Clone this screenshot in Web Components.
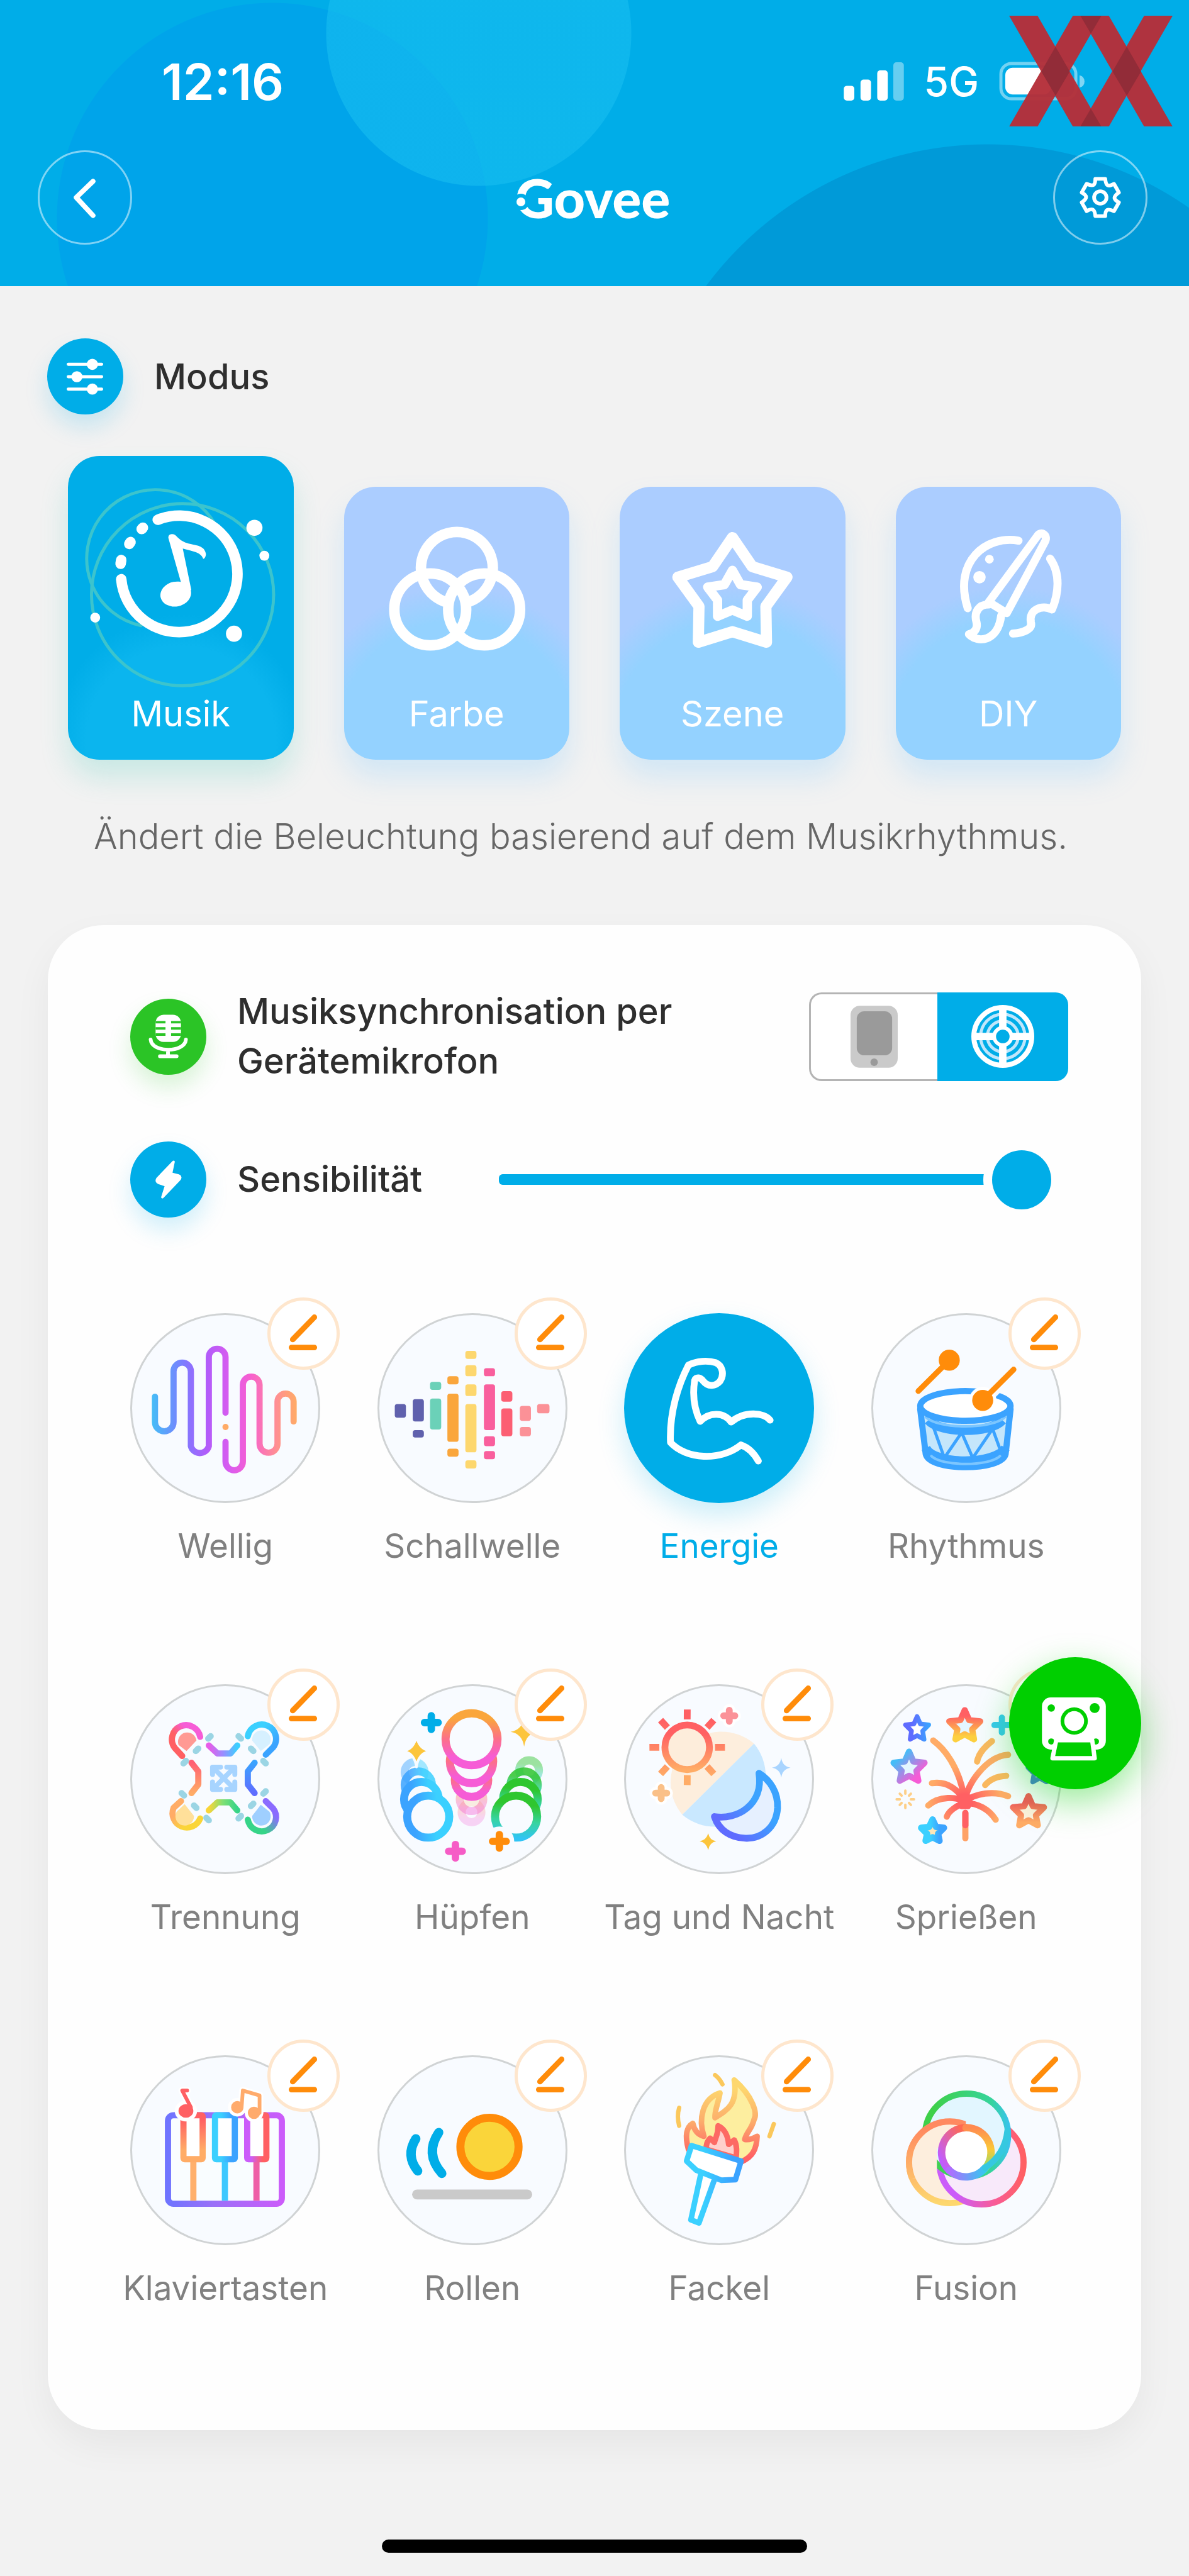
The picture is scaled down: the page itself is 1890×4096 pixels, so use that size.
<!DOCTYPE html>
<html lang="de">
<head>
<meta charset="utf-8">
<meta name="viewport" content="width=device-width, initial-scale=1">
<title>Govee – Musikmodus</title>
<style>
  body {
    margin: 0;
    background: #f2f2f2;
    font-family: Inter, "Noto Sans", sans-serif;
    color: #2e2e2e;
  }

  .modes {
    display: grid;
    grid-template-columns: repeat(4, 1fr);
    gap: 80px;
    align-items: end;
    padding: 66px 108px 0;
  }

  .hint {
    margin: 82px 0 101px;
    padding-left: 149px;
    font-size: 56px;
    line-height: 80px;
    font-weight: 300;
    color: #666;
  }

  .effects {
    display: grid;
    grid-template-columns: repeat(4, 1fr);
    row-gap: 188px;
    margin: 152px 82px 0 86px;
  }

  svg { fill: none; stroke-linecap: round; stroke-linejoin: round; }
</style>
</head>
<body>

<app-header></app-header>

<main>
  <section-title>
    <icon-badge slot="icon">
      <svg viewBox="0 0 123 123" stroke="#fff" stroke-width="5">
        <path d="M34 42H88M34 62H88M34 82H88"/>
        <g fill="#fff" stroke="none"><circle cx="73" cy="42" r="9"/><circle cx="48" cy="62" r="9"/><circle cx="73" cy="82" r="9"/></g>
      </svg>
    </icon-badge>
    Modus
  </section-title>

  <div class="modes">
    <mode-card active>
      <svg slot="icon" viewBox="0 0 364 384">
        <g stroke="#3cc4cd" stroke-width="5">
          <path d="M238 111A111 111 0 1 0 118 274"/>
          <circle cx="185" cy="224" r="147"/>
        </g>
        <g stroke="#fff" stroke-width="17">
          <path d="M145 103A94 94 0 1 1 86 199"/>
          <path d="M86 168L85 174M99 142L101 139M119 118L121 116"/>
        </g>
        <g fill="#fff">
          <circle cx="301" cy="116" r="13"/>
          <circle cx="317" cy="161" r="8"/>
          <circle cx="44" cy="261" r="8"/>
          <circle cx="268" cy="287" r="13"/>
          <ellipse cx="174" cy="223" rx="25" ry="20" transform="rotate(-12 174 223)"/>
          <path d="M163 132C163 126 171 125 176 132C186 143 200 143 210 146C222 150 224 160 219 165C214 153 196 152 184 148L198 216L186 213Z" stroke="#fff" stroke-width="2"/>
        </g>
      </svg>
      Musik
    </mode-card>
    <mode-card>
      <svg slot="icon" viewBox="0 0 364 334" stroke="#fff" stroke-width="17">
        <path d="M161 185A58 58 0 1 1 203 185"/>
        <circle cx="139" cy="198" r="58"/>
        <circle cx="226" cy="198" r="58"/>
      </svg>
      Farbe
    </mode-card>
    <mode-card>
      <svg slot="icon" viewBox="0 0 364 334" stroke="#fff" stroke-width="18">
        <path d="M182 82L214 129L270 146L236 193L237 251L182 234L127 251L128 193L94 146L150 129Z"/>
        <path stroke-width="15" d="M182 135L195 158L222 162L206 183L206 209L182 199L158 209L158 183L142 162L169 158Z"/>
      </svg>
      Szene
    </mode-card>
    <mode-card>
      <svg slot="icon" viewBox="0 0 364 334" stroke="#fff" stroke-width="13">
        <path d="M198 87C146 78 92 120 116 196"/>
        <path d="M249 116C266 140 263 172 252 198C236 190 214 198 218 219C221 230 205 236 189 237"/>
        <path d="M150 186L228 80C234 70 246 78 241 88L179 204Z"/>
        <path d="M150 190C133 190 126 203 130 218C133 230 126 236 118 238C132 253 165 250 170 208"/>
        <g fill="#fff" stroke="none"><circle cx="151" cy="117" r="7"/><circle cx="135" cy="146" r="10"/></g>
      </svg>
      DIY
    </mode-card>
  </div>

  <p class="hint">Ändert die Beleuchtung basierend auf dem Musikrhythmus.</p>

  <music-panel>
    <setting-row>
      <icon-badge slot="icon" tone="green">
        <svg viewBox="0 0 123 123" stroke="#fff" stroke-width="6">
          <rect x="41" y="26" width="41" height="44" rx="13" fill="#fff" stroke="none"/>
          <path d="M41 38H57M66 38H82M41 48H57M66 48H82M41 58H57M66 58H82" stroke="#2bc426" stroke-width="4" stroke-linecap="butt"/>
          <path d="M33 66C35 88 88 88 90 66M61 84V93M48 93H75"/>
        </svg>
      </icon-badge>
      Musiksynchronisation per<br>Gerätemikrofon
      <source-toggle slot="control"></source-toggle>
    </setting-row>
    <setting-row>
      <icon-badge slot="icon">
        <svg viewBox="0 0 123 123">
          <path d="M70 33L44 60C42 63 43 66 46 67L58 71L52 90L79 62C82 59 81 56 78 55L66 52Z" fill="#fff" stroke="#fff" stroke-width="4"/>
        </svg>
      </icon-badge>
      Sensibilität
      <level-slider slot="control" label="Sensibilität"></level-slider>
    </setting-row>

    <div class="effects">
      <effect-item>
        <svg slot="icon" viewBox="0 0 307 307" stroke="url(#wave)" stroke-width="10">
          <linearGradient id="wave" gradientUnits="userSpaceOnUse" x1="35" y1="0" x2="269" y2="0">
            <stop offset="0" stop-color="#45bdf7"/><stop offset=".22" stop-color="#7d7bff"/><stop offset=".38" stop-color="#b25cfa"/>
            <stop offset=".55" stop-color="#dc5cee"/><stop offset=".68" stop-color="#f75fcf"/><stop offset=".86" stop-color="#ff8f93"/><stop offset="1" stop-color="#ffab66"/>
          </linearGradient>
          <path d="M40 135V176A15 15 0 0 0 70 176V94A14 14 0 0 1 98 94V215A15 15 0 0 0 127 215V71A13 13 0 0 1 154 71V161"/>
          <path d="M154 208V240A14 14 0 0 0 182 240V116A13 13 0 0 1 209 116V211A14 14 0 0 0 238 211V143A13 13 0 0 1 264 143V175"/>
          <circle cx="154" cy="184" r="5" fill="#ffab66" stroke="none"/>
        </svg>
        Wellig
      </effect-item>
      <effect-item>
        <svg slot="icon" viewBox="0 0 307 307">
          <g fill="#6061ad"><rect x="28" y="147" width="18" height="22" rx="4"/><rect x="57" y="139" width="18" height="36" rx="4"/><rect x="57" y="189" width="18" height="12" rx="4"/></g>
          <g fill="#6bd1b8"><rect x="85" y="111" width="18" height="13" rx="4"/><rect x="85" y="138" width="18" height="50" rx="4"/></g>
          <g fill="#faa63c"><rect x="113" y="102" width="18" height="13" rx="4"/><rect x="113" y="130" width="18" height="78" rx="4"/><rect x="113" y="219" width="18" height="13" rx="4"/></g>
          <g fill="#fdd76e"><rect x="142" y="61" width="18" height="13" rx="4"/><rect x="142" y="84" width="18" height="18" rx="4"/><rect x="142" y="115" width="18" height="19" rx="4"/><rect x="142" y="147" width="18" height="78" rx="4"/><rect x="142" y="238" width="18" height="13" rx="4"/></g>
          <g fill="#f95f9d"><rect x="172" y="89" width="18" height="13" rx="4"/><rect x="172" y="115" width="18" height="74" rx="4"/><rect x="172" y="199" width="18" height="16" rx="4"/><rect x="172" y="223" width="18" height="13" rx="4"/></g>
          <g fill="#fc5f73"><rect x="200" y="126" width="18" height="17" rx="4"/><rect x="200" y="154" width="18" height="45" rx="4"/></g>
          <g fill="#fb9197"><rect x="230" y="150" width="18" height="24" rx="4"/><rect x="230" y="184" width="18" height="15" rx="4"/><rect x="258" y="147" width="20" height="15" rx="4"/></g>
        </svg>
        Schallwelle
      </effect-item>
      <effect-item active>
        <svg slot="icon" viewBox="0 0 307 307" stroke="#fff" stroke-width="11">
          <path d="M236 173C226 160 194 158 173 176C162 160 138 159 123 175C112 152 111 128 114 109C116 102 124 104 128 110C136 120 148 118 155 110C163 98 158 84 148 80C135 76 118 77 104 84C88 115 73 160 75 209C100 236 155 240 189 213Q206 219 217 239"/>
        </svg>
        Energie
      </effect-item>
      <effect-item>
        <svg slot="icon" viewBox="0 0 307 307">
          <path d="M78 152L88 190V226C92 256 212 256 217 226V190L225 152Z" fill="#c4e6fb"/>
          <path d="M79 155L88 228C94 256 211 256 217 228L225 155" stroke="#3ba3ff" stroke-width="10"/>
          <path d="M92 173C112 195 192 195 212 173M88 218C102 246 200 246 217 218" stroke="#3ba3ff" stroke-width="15" stroke-linecap="butt"/>
          <path d="M101 186L118 234L146 193L164 234L196 187L208 220" stroke="#3ba3ff" stroke-width="5"/>
          <path d="M88 168C108 188 196 188 216 168M97 231C115 248 190 248 208 231" stroke="#7cc6ff" stroke-width="4"/>
          <ellipse cx="152" cy="150" rx="73" ry="24" fill="#fff" stroke="#3ba3ff" stroke-width="10"/>
          <path d="M180 141L230 91" stroke="#f8fbff" stroke-width="22"/>
          <circle cx="180" cy="141" r="22" fill="#fff"/>
          <g stroke="#ff8c0a" stroke-width="9"><path d="M126 76L76 126M180 141L230 91"/></g>
          <g fill="#ff8c0a"><circle cx="126" cy="76" r="17"/><circle cx="180" cy="141" r="17"/></g>
        </svg>
        Rhythmus
      </effect-item>

      <effect-item>
        <svg slot="icon" viewBox="0 0 307 307" stroke-width="10">
          <linearGradient id="tl" x1="0" y1="1" x2="1" y2="0"><stop offset=".4" stop-color="#ff6063"/><stop offset=".7" stop-color="#f65cd6"/></linearGradient>
          <linearGradient id="tr" x1="0" y1="0" x2="1" y2="1"><stop offset=".3" stop-color="#3bd0ff"/><stop offset=".8" stop-color="#3ba3ff"/></linearGradient>
          <linearGradient id="bl" x1="0" y1="0" x2="1" y2="1"><stop offset=".3" stop-color="#ffac66"/><stop offset=".7" stop-color="#fad538"/></linearGradient>
          <linearGradient id="br" x1="0" y1="1" x2="1" y2="0"><stop offset=".3" stop-color="#36d488"/><stop offset=".75" stop-color="#8b6bff"/></linearGradient>
          <linearGradient id="bt"><stop offset="0" stop-color="#e85ce8"/><stop offset=".5" stop-color="#9a8cff"/><stop offset="1" stop-color="#3bd0ff"/></linearGradient>
          <linearGradient id="bb"><stop offset="0" stop-color="#fad538"/><stop offset=".5" stop-color="#7edf74"/><stop offset="1" stop-color="#36d488"/></linearGradient>
          <linearGradient id="bx" x1="0" y1="0" x2="0" y2="1"><stop offset="0" stop-color="#ff5f73"/><stop offset="1" stop-color="#ffac66"/></linearGradient>
          <linearGradient id="by" x1="0" y1="0" x2="0" y2="1"><stop offset="0" stop-color="#3ba3ff"/><stop offset="1" stop-color="#5f6cff"/></linearGradient>
          <path d="M113 85A23 23 0 1 0 72 103L84 116" stroke="url(#tl)"/>
          <path d="M190 84A23 23 0 1 1 231 102L219 114" stroke="url(#tr)"/>
          <path d="M113 217A23 23 0 1 1 70 200L82 189" stroke="url(#bl)"/>
          <path d="M190 219A23 23 0 1 0 231 201L219 189" stroke="url(#br)"/>
          <path d="M78 98A15 15 0 1 1 107 91L91 108Z" fill="#ff9a94"/>
          <path d="M197 91A15 15 0 1 1 225 97L211 108Z" fill="#d6f0ff"/>
          <path d="M75 206A15 15 0 1 0 103 213L88 194Z" fill="#ffe09a"/>
          <path d="M197 213A15 15 0 1 0 225 206L211 195Z" fill="#9fcfff"/>
          <path d="M127 99L141 112H162L173 99" stroke="url(#bt)"/>
          <path d="M127 204L141 191H162L173 204" stroke="url(#bb)"/>
          <path d="M99 127L110 141V162L99 176" stroke="url(#bx)"/>
          <path d="M201 127L190 141V162L201 176" stroke="url(#by)"/>
          <path stroke="#9bd5e4" d="M126 88L130 84M106 108L110 104M86 128L90 124M175 84L179 88M195 104L199 108M215 124L219 128M83 176L87 180M103 196L107 200M123 216L127 220M219 173L215 177M199 193L195 197M179 213L175 217"/>
          <path stroke="#a7d4ff" stroke-width="8" d="M135 136L167 168M167 136L135 168M146 134H133V146M156 134H169V146M146 170H133V158M156 170H169V158"/>
        </svg>
        Trennung
      </effect-item>
      <effect-item>
        <svg slot="icon" viewBox="0 0 307 307" stroke-width="13">
          <linearGradient id="warm" x1="0" y1="0" x2="0" y2="1"><stop offset=".1" stop-color="#faa63c"/><stop offset=".5" stop-color="#fc6f8a"/><stop offset=".85" stop-color="#f65cd6"/></linearGradient>
          <linearGradient id="cool"><stop offset=".2" stop-color="#3ba3ff"/><stop offset=".7" stop-color="#3bd0ff"/></linearGradient>
          <linearGradient id="leaf" x1=".5" y1="0" x2=".4" y2="1"><stop offset=".2" stop-color="#2fc62f"/><stop offset=".6" stop-color="#36d4a0"/><stop offset="1" stop-color="#30c4f5"/></linearGradient>
          <g stroke="url(#warm)" fill="#f8fbff">
            <circle cx="152" cy="207" r="16" opacity=".25"/>
            <circle cx="152" cy="186" r="19" opacity=".4"/>
            <circle cx="152" cy="155" r="27"/>
            <circle cx="152" cy="125" r="35"/>
            <circle cx="152" cy="89" r="42"/>
          </g>
          <g stroke="url(#cool)" fill="#f8fbff">
            <circle cx="60" cy="142" r="16" opacity=".45"/>
            <circle cx="66" cy="163" r="22" opacity=".85"/>
            <circle cx="71" cy="186" r="28"/>
            <circle cx="82" cy="214" r="34"/>
          </g>
          <g stroke="url(#leaf)" fill="#f8fbff">
            <circle cx="245" cy="139" r="16" opacity=".45"/>
            <circle cx="237" cy="163" r="22" opacity=".85"/>
            <circle cx="231" cy="186" r="28"/>
            <circle cx="224" cy="214" r="34"/>
          </g>
          <circle cx="197" cy="254" r="24" fill="#f8fbff"/>
          <path d="M87 51V73M76 62H98" stroke="#00ade8" stroke-width="12"/>
          <path d="M126 259V281M115 270H137" stroke="#f65cc6" stroke-width="12"/>
          <path d="M197 243V265M186 254H208" stroke="#ff8c0a" stroke-width="12"/>
          <path d="M63 82Q66 105 86 108Q66 111 63 134Q60 111 41 108Q60 105 63 82Z" fill="#fcc53c" stroke="#f8fbff" stroke-width="4"/>
          <path d="M237 54Q240 74 258 77Q240 80 237 101Q234 80 215 77Q234 74 237 54Z" fill="#fcc53c"/>
        </svg>
        Hüpfen
      </effect-item>
      <effect-item>
        <svg slot="icon" viewBox="0 0 307 307">
          <linearGradient id="sun" x1="0" y1="0" x2="0" y2="1"><stop offset=".2" stop-color="#ff6063"/><stop offset="1" stop-color="#ffac66"/></linearGradient>
          <linearGradient id="rays" gradientUnits="userSpaceOnUse" x1="0" y1="50" x2="0" y2="150"><stop offset=".1" stop-color="#ff6063"/><stop offset="1" stop-color="#ffac66"/></linearGradient>
          <linearGradient id="moon" x1="1" y1="0" x2="0" y2="1"><stop offset=".4" stop-color="#3ba3ff"/><stop offset=".8" stop-color="#5f6cff"/></linearGradient>
          <path d="M210 96A82 82 0 0 0 94 211Z" fill="#fdeedd"/>
          <path d="M210 96A82 82 0 0 1 94 211Z" fill="#c9e8ff"/>
          <circle cx="102" cy="102" r="36" fill="#fdeddb" stroke="url(#sun)" stroke-width="11"/>
          <path stroke="url(#rays)" stroke-width="11" stroke-linecap="butt" d="M102.1 41L102 57M102.1 147L102 163M41 102.1L57 102M147 102.1L163 102M59 58L70 70M145 58L134 70M59 145L70 133M145 145L134 133"/>
          <path d="M170 42V60M161 51H179M60 167V185M51 176H69" stroke="#fff" stroke-width="20"/>
          <path d="M170 42V60M161 51H179" stroke="#fb9298" stroke-width="11"/>
          <path d="M60 167V185M51 176H69" stroke="#fac088" stroke-width="11"/>
          <path d="M254 119Q256 133 269 135Q256 137 254 151Q252 137 239 135Q252 133 254 119Z" fill="#a8d4ff"/>
          <path d="M136 241Q138 252 149 254Q138 256 136 268Q133 256 122 254Q133 252 136 241Z" fill="#fcc53c"/>
          <path d="M218 144C236 155 249 175 248 200C246 232 222 250 196 249C172 248 153 236 146 214C182 220 226 195 218 144Z" fill="#e6f0ff" stroke="url(#moon)" stroke-width="11"/>
        </svg>
        Tag und Nacht
      </effect-item>
      <effect-item>
        <svg slot="icon" viewBox="0 0 307 307">
          <linearGradient id="s1"><stop offset=".3" stop-color="#5f6cff"/><stop offset="1" stop-color="#3ba3ff"/></linearGradient>
          <linearGradient id="s2" x1="0" y1="0" x2="0" y2="1"><stop offset=".2" stop-color="#ff6063"/><stop offset=".9" stop-color="#fdd040"/></linearGradient>
          <linearGradient id="s3" x1="0" y1="0" x2="1" y2="1"><stop offset=".2" stop-color="#45bdf7"/><stop offset=".8" stop-color="#f65cd6"/></linearGradient>
          <linearGradient id="s4"><stop offset=".4" stop-color="#3bd0ff"/><stop offset=".8" stop-color="#3ba3ff"/></linearGradient>
          <linearGradient id="s5" x1="0" y1="0" x2="0" y2="1"><stop offset=".2" stop-color="#f05a5a"/><stop offset=".9" stop-color="#ffac66"/></linearGradient>
          <radialGradient id="burst" gradientUnits="userSpaceOnUse" cx="151" cy="190" r="85"><stop offset=".15" stop-color="#ff6063"/><stop offset=".7" stop-color="#ffab66"/></radialGradient>
          <g stroke-width="10">
            <path transform="translate(74 71) scale(.75)" stroke="url(#s1)" fill="#fff" d="M0 -25L7 -9L25 -7L12 6L15 24L0 16L-15 24L-12 6L-25 -7L-7 -9Z"/>
            <path transform="translate(151 67)" stroke="url(#s2)" fill="#e4f6ff" d="M0 -25L7 -9L25 -7L12 6L15 22L0 14L-15 22L-12 6L-25 -7L-7 -9Z"/>
            <path transform="translate(61 134)" stroke="url(#s3)" fill="#e4f6ff" d="M0 -25L7 -9L25 -7L12 6L15 22L0 14L-15 22L-12 6L-25 -7L-7 -9Z"/>
            <path transform="translate(99 237) scale(.8)" stroke="url(#s4)" stroke-width="13" fill="#fde6b8" d="M0 -23L7 -8L23 -6L11 6L14 20L0 13L-14 20L-11 6L-23 -6L-7 -8Z"/>
            <path transform="translate(254 206)" stroke="url(#s5)" fill="#fdf0dd" d="M0 -25L7 -9L25 -7L12 6L15 22L0 14L-15 22L-12 6L-25 -7L-7 -9Z"/>
            <path transform="translate(272 140) scale(.75)" stroke="#4a7fd8" d="M0 -25L7 -9L25 -7L12 6L15 24L0 16L-15 24L-12 6L-25 -7L-7 -9Z"/>
          </g>
          <path d="M211 54V78M199 66H223" stroke="#39c8f0" stroke-width="10"/>
          <path d="M55 177V172M55 195V200M46 186H41M64 186H69M49 180L46 177M61 180L64 177M49 192L46 195M61 192L64 195" stroke="#fdcf88" stroke-width="4"/>
          <g stroke="url(#burst)" stroke-width="10">
            <path d="M100 91C128 112 146 150 151 190C154 160 188 116 221 114"/>
            <path d="M98 160C124 156 142 172 151 190M92 196C110 180 138 182 151 190M221 181C198 172 168 176 151 190M122 214C125 205 138 196 151 192C172 192 190 202 201 219"/>
            <path d="M144 183L158 183L156 197L146 197Z" fill="#ff6063"/>
          </g>
          <path d="M151.9 208L152 249" stroke="#ffa266" stroke-width="10"/>
          <path d="M152 208V228" stroke="#ff6063" stroke-width="10"/>
          <path d="M195 92Q174 108 171 125M218 148Q196 149 184 163" stroke="#fbb860" stroke-width="10"/>
        </svg>
        Sprießen
      </effect-item>

      <effect-item>
        <svg slot="icon" viewBox="0 0 307 307" stroke-width="10">
          <linearGradient id="frame"><stop offset="0" stop-color="#6f74ff"/><stop offset=".4" stop-color="#9a70f8"/><stop offset="1" stop-color="#cb5cfa"/></linearGradient>
          <linearGradient id="k1" x1="0" y1="0" x2="0" y2="1"><stop offset=".1" stop-color="#ff6063"/><stop offset=".8" stop-color="#ffac66"/></linearGradient>
          <linearGradient id="k2"><stop offset=".3" stop-color="#3bd0ff"/><stop offset=".8" stop-color="#3ba3ff"/></linearGradient>
          <linearGradient id="k3"><stop offset=".2" stop-color="#cb5cfa"/><stop offset=".8" stop-color="#ff6063"/></linearGradient>
          <rect x="61" y="97" width="184" height="143" rx="9" fill="#f9fdff" stroke="url(#frame)"/>
          <g stroke-linecap="butt"><path d="M102 170V235" stroke="#ffb06c"/><path d="M153 170V235" stroke="#3cc8ff"/><path d="M204 170V235" stroke="#ee5fa6"/></g>
          <g fill="#fff">
            <rect x="86" y="97" width="31" height="71" rx="2" stroke="url(#k1)"/>
            <rect x="137" y="97" width="32" height="71" rx="2" stroke="url(#k2)"/>
            <rect x="189" y="97" width="31" height="71" rx="2" stroke="url(#k3)"/>
          </g>
          <g fill="#fff" stroke="#fff" stroke-width="12">
            <ellipse cx="90" cy="90" rx="12" ry="11"/><path d="M98 84L84 57H92"/>
            <circle cx="173" cy="84" r="9"/><circle cx="200" cy="93" r="9"/><path d="M180 84L182 57L209 65V93"/>
          </g>
          <g fill="#ff6063" stroke="#ff6063" stroke-width="6"><ellipse cx="90" cy="90" rx="9" ry="8"/><path d="M98 84L84 57H92" fill="none"/></g>
          <g fill="#ffab6c" stroke="#ffab6c" stroke-width="6"><circle cx="173" cy="84" r="7"/><circle cx="200" cy="93" r="7"/><path d="M180 84L182 57L209 65V93" fill="none"/></g>
        </svg>
        Klaviertasten
      </effect-item>
      <effect-item>
        <svg slot="icon" viewBox="0 0 307 307">
          <circle cx="181" cy="148" r="47" fill="#fad53a" stroke="#ff8c0a" stroke-width="13"/>
          <path d="M62 135Q45 162 65 187M99 125Q76 159 104 191" stroke="#00ade8" stroke-width="15"/>
          <rect x="56" y="217" width="194" height="16" rx="8" fill="#cacaca"/>
        </svg>
        Rollen
      </effect-item>
      <effect-item>
        <svg slot="icon" viewBox="0 0 307 307" stroke-width="9">
          <linearGradient id="fire" x1="0" y1="0" x2="0" y2="1"><stop offset=".1" stop-color="#fdd76e"/><stop offset=".5" stop-color="#fcae6c"/><stop offset=".75" stop-color="#fd8068"/><stop offset=".95" stop-color="#ff6063"/></linearGradient>
          <linearGradient id="torch"><stop offset=".3" stop-color="#3bd0ff"/><stop offset=".85" stop-color="#3ba3ff"/></linearGradient>
          <path d="M104 152C98 130 101 116 111 110C113 120 118 128 129 131C120 104 126 70 155 61C152 78 146 90 147 101C168 88 184 78 178 40C208 66 216 94 210 104C206 120 198 124 195 136C202 137 210 134 215 131C214 152 208 164 190 172Z" fill="#fdee9f" stroke="url(#fire)"/>
          <path d="M133 152C132 144 135 138 139 134L146 141C148 132 152 128 152 114C164 120 168 132 169 144L178 137C183 146 182 156 181 166Z" fill="#ffd0cc" stroke="#fd6a64"/>
          <path d="M124 192L108 266L121 271L146 201M109 146L189 171L180 201L157 202L117 186L101 171Z" fill="#fff" stroke="url(#torch)"/>
          <path d="M147 32Q154 37 159 47M89 85Q85 98 89 114M242 111L235 131" stroke="#fbc85c" stroke-width="7"/>
        </svg>
        Fackel
      </effect-item>
      <effect-item>
        <svg slot="icon" viewBox="0 0 307 307" stroke-width="10">
          <linearGradient id="f1"><stop offset=".1" stop-color="#3fd04a"/><stop offset=".8" stop-color="#36d49c"/><stop offset="1" stop-color="#38c4e8"/></linearGradient>
          <linearGradient id="f2" x1="0" y1="0" x2="0" y2="1"><stop offset=".1" stop-color="#ff8a60"/><stop offset="1" stop-color="#fdd76e"/></linearGradient>
          <linearGradient id="f3"><stop offset=".2" stop-color="#cb5cfa"/><stop offset=".65" stop-color="#f85c98"/><stop offset="1" stop-color="#ff6063"/></linearGradient>
          <linearGradient id="f4" x1="0" y1="1" x2="1" y2="0"><stop offset=".1" stop-color="#c05cff"/><stop offset=".9" stop-color="#ff6a50"/></linearGradient>
          <linearGradient id="f5" x1="0" y1="0" x2="0" y2="1"><stop offset="0" stop-color="#ff8a50"/><stop offset=".5" stop-color="#fac838"/><stop offset="1" stop-color="#7ede74"/></linearGradient>
          <linearGradient id="f6"><stop offset="0" stop-color="#b06cff"/><stop offset="1" stop-color="#34c8f0"/></linearGradient>
          <clipPath id="fc"><path d="M0 0H153V150H106V200H0Z"/></clipPath>
          <circle cx="127" cy="173" r="66" fill="#fdeedd" stroke="url(#f2)"/>
          <circle cx="178" cy="173" r="68" fill="#f8e9fa" stroke="url(#f3)"/>
          <circle cx="154" cy="129" r="67" fill="#e2f6ff" stroke="url(#f1)"/>
          <circle cx="127" cy="173" r="66" fill="#fdeedd" stroke="url(#f2)" clip-path="url(#fc)"/>
          <circle cx="153" cy="157" r="40" fill="#fff"/>
          <path d="M126 186A40 40 0 0 1 153 117" stroke="url(#f4)" stroke-width="12"/>
          <path d="M153 117A40 40 0 0 1 181 186" stroke="url(#f5)" stroke-width="12"/>
          <path d="M126 186A40 40 0 0 0 184 182" stroke="url(#f6)" stroke-width="12"/>
          <path d="M184 182Q216 160 220 122" stroke="#35c8e0"/>
        </svg>
        Fusion
      </effect-item>
    </div>
  </music-panel>
</main>

<home-bar></home-bar>

<script>
class AppHeader extends HTMLElement {
  connectedCallback() {
    this.attachShadow({ mode: "open" });
    this.shadowRoot.innerHTML = `
      <style>
        :host {
          display: block;
          position: relative;
          overflow: hidden;
          color: white;
          background:
            radial-gradient(circle at 761px 53px, rgba(24, 190, 240, 0.6) 242px, transparent 243px),
            radial-gradient(circle at 433px 347px, #00a4ea 342px, transparent 343px),
            radial-gradient(circle at 1570px 787px, #009ad8 557px, transparent 558px),
            #00ade8;
        }

        svg { fill: none; stroke-linecap: round; stroke-linejoin: round; }

        .status {
          display: flex;
          justify-content: space-between;
          align-items: center;
          height: 88px;
          padding: 85px 166px 66px 257px;
        }

        time { font-size: 80px; font-weight: 600; }

        .radio {
          display: flex;
          align-items: center;
          gap: 32px;
          font-size: 64px;
          font-weight: 500;
        }

        nav {
          display: grid;
          grid-template-columns: 150px 1fr 150px;
          justify-items: center;
          align-items: center;
          padding: 0 66px 66px 60px;
        }

        button {
          width: 150px;
          height: 150px;
          padding: 0;
          border: 3px solid rgba(255, 255, 255, 0.5);
          border-radius: 50%;
          background: none;
        }

        button svg { display: block; width: 100%; }

        .brand {
          position: relative;
          font-family: Lato, sans-serif;
          font-size: 86px;
          font-weight: 900;
          line-height: 100px;
          color: white;
          text-decoration: none;
        }

        /* dot that splits the bow of the G */
        .brand::before {
          content: "";
          position: absolute;
          left: -4px;
          top: 44px;
          width: 14px;
          height: 14px;
          border: 6px solid #00ade8;
          border-radius: 50%;
          background: white;
        }

        .mark {
          position: absolute;
          top: 25px;
          right: 26px;
          width: 260px;
        }
      </style>

      <div class="status">
        <time>12:16</time>
        <div class="radio">
          <svg width="96" height="61" viewBox="0 0 97 62" style="fill: white">
            <rect x="0" y="38" width="17" height="24" rx="5"/>
            <rect x="27" y="28" width="17" height="34" rx="5"/>
            <rect x="54" y="13" width="17" height="49" rx="5"/>
            <rect x="80" y="0" width="17" height="62" rx="5" opacity=".4"/>
          </svg>
          <span>5G</span>
          <svg width="136" height="62" viewBox="0 0 138 63">
            <rect x="3" y="3" width="121" height="57" rx="17" stroke="#fff" stroke-width="5" opacity=".45"/>
            <rect x="10" y="10" width="74" height="43" rx="12" fill="#fff"/>
            <path d="M130 22Q138 24 138 32T130 42Z" fill="#fff" opacity=".5"/>
          </svg>
        </div>
      </div>

      <nav>
        <button aria-label="Zurück">
          <svg viewBox="0 0 146 146" stroke="#fff" stroke-width="8"><path d="M86 47L59 73L86 102"/></svg>
        </button>
        <a class="brand" href="#">Govee</a>
        <button aria-label="Einstellungen">
          <svg viewBox="-73 -73 146 146" stroke="#fff" stroke-width="6">
            <path d="M-8 -30L8 -30C9 -18 13 -17 22 -22L30 -8C20 -1 21 3 30 8L22 22C11 17 8 20 8 30L-8 30C-9 18 -13 17 -22 22L-30 8C-20 1 -21 -3 -30 -8L-22 -22C-11 -17 -8 -20 -8 -30Z"/>
            <circle r="10"/>
          </svg>
        </button>
      </nav>

      <svg class="mark" viewBox="0 0 264 179" aria-hidden="true">
        <g fill="#b5303a" opacity=".97">
          <path d="M0 0H46L149 179H103ZM115 0H161L264 179H218Z"/>
          <path d="M103 0H149L46 179H0ZM218 0H264L161 179H115Z"/>
        </g>
        <path fill="#922c38" d="M75 50L98 90L75 129L52 90ZM190 50L213 90L190 129L167 90ZM115 0H149L132 29ZM115 179H149L132 150Z"/>
      </svg>
    `;
  }
}

class SectionTitle extends HTMLElement {
  connectedCallback() {
    this.attachShadow({ mode: "open" });
    this.shadowRoot.innerHTML = `
      <style>
        :host { display: block; padding: 83px 75px 0; }

        h2 {
          display: flex;
          align-items: center;
          gap: 49px;
          margin: 0;
          font-size: 56px;
          font-weight: 500;
        }
      </style>
      <h2><slot name="icon"></slot><span><slot></slot></span></h2>
    `;
  }
}

class IconBadge extends HTMLElement {
  connectedCallback() {
    this.attachShadow({ mode: "open" });
    this.shadowRoot.innerHTML = `
      <style>
        :host {
          display: block;
          flex: none;
          width: 121px;
          height: 121px;
          border-radius: 50%;
          background: #00ade8;
          box-shadow: 0 20px 36px rgba(0, 173, 232, 0.18);
        }

        :host([tone="green"]) {
          background: #2bc426;
          box-shadow: 0 20px 36px rgba(43, 196, 38, 0.18);
        }

        ::slotted(svg) { display: block; width: 100%; }
      </style>
      <slot></slot>
    `;
  }
}

class ModeCard extends HTMLElement {
  connectedCallback() {
    this.attachShadow({ mode: "open" });
    this.shadowRoot.innerHTML = `
      <style>
        :host { display: block; }

        button {
          display: block;
          width: 100%;
          padding: 0 0 40px;
          border: 0;
          border-radius: 50px;
          background: radial-gradient(circle at 50% calc(100% - 31px), #94d2ff 190px, #abcdff 245px);
          box-shadow: 0 28px 44px rgba(120, 200, 255, 0.25);
          color: white;
          font: inherit;
          font-size: 56px;
          line-height: 65px;
        }

        :host([active]) button {
          background: radial-gradient(circle at 50% calc(100% - 31px), #0bb5ee 150px, #00ade8 200px);
          box-shadow: 0 28px 44px rgba(60, 200, 180, 0.22);
        }

        ::slotted(svg) { display: block; width: 100%; }
      </style>
      <button aria-pressed="${this.hasAttribute("active")}">
        <slot name="icon"></slot>
        <slot></slot>
      </button>
    `;
  }
}

class MusicPanel extends HTMLElement {
  connectedCallback() {
    this.attachShadow({ mode: "open" });
    this.shadowRoot.innerHTML = `
      <style>
        :host {
          display: block;
          position: relative;
          margin: 0 76px;
          padding: 98px 0 194px;
          border-radius: 88px;
          background: #fefefe;
          box-shadow: 0 24px 60px rgba(0, 0, 0, 0.05);
        }

        /* camera shortcut, floats over the effects */
        .camera {
          position: absolute;
          top: 1164px;
          right: 0;
          width: 210px;
          height: 210px;
          padding: 0;
          border: 0;
          border-radius: 50%;
          background: #00cf00;
          box-shadow: 0 20px 56px rgba(0, 207, 0, 0.4);
        }

        .camera svg { display: block; width: 100%; }
      </style>
      <slot></slot>
      <button class="camera" aria-label="Kamera">
        <svg viewBox="0 0 213 213" fill="none">
          <rect x="53" y="65" width="103" height="84" rx="14" fill="#fff"/>
          <g fill="#00cf00">
            <circle cx="68" cy="82" r="6"/><circle cx="138" cy="82" r="8"/>
            <circle cx="68" cy="136" r="5"/><circle cx="140" cy="136" r="5"/>
            <circle cx="105" cy="103" r="22"/>
          </g>
          <circle cx="105" cy="103" r="16" fill="#fff"/>
          <path d="M76 134H134L138 163H70Z" fill="#00cf00" stroke="#fff" stroke-width="7" stroke-linejoin="round"/>
        </svg>
      </button>
    `;
  }
}

class SettingRow extends HTMLElement {
  connectedCallback() {
    this.attachShadow({ mode: "open" });
    this.shadowRoot.innerHTML = `
      <style>
        :host {
          display: flex;
          align-items: center;
          padding: 0 116px 0 131px;
          font-size: 56px;
          line-height: 79px;
          font-weight: 500;
        }

        :host(:nth-of-type(n + 2)) { margin-top: 88px; }

        .text { margin-left: 49px; white-space: nowrap; }
      </style>
      <slot name="icon"></slot>
      <div class="text"><slot></slot></div>
      <slot name="control"></slot>
    `;
  }
}

class SourceToggle extends HTMLElement {
  connectedCallback() {
    this.attachShadow({ mode: "open" });
    this.shadowRoot.innerHTML = `
      <style>
        :host { display: block; margin-left: auto; }

        fieldset {
          display: grid;
          grid-template-columns: 204px 208px;
          margin: 0;
          padding: 0;
          border: 0;
        }

        label {
          display: grid;
          place-items: center;
          height: 141px;
          box-sizing: border-box;
          border: 3px solid #b4b4b4;
          border-right: 0;
          border-radius: 20px 0 0 20px;
          background: white;
        }

        label + label {
          border: 0;
          border-radius: 0 20px 20px 0;
        }

        label:has(input:checked) { background: #00ade8; }

        input {
          appearance: none;
          grid-area: 1 / 1;
          width: 1px;
          height: 1px;
          margin: 0;
          opacity: 0;
        }

        svg { grid-area: 1 / 1; }
      </style>
      <fieldset>
        <label>
          <input type="radio" name="source" aria-label="Telefonmikrofon">
          <svg width="75" height="99" viewBox="0 0 76 100">
            <rect width="76" height="100" rx="15" fill="#cacaca"/>
            <rect x="10" y="9" width="57" height="71" rx="12" fill="#9a9a9a"/>
            <circle cx="38" cy="91" r="6" fill="#9a9a9a"/>
          </svg>
        </label>
        <label>
          <input type="radio" name="source" aria-label="Gerätemikrofon" checked>
          <svg width="101" height="101" viewBox="0 0 103 103" fill="none">
            <g stroke="#c0e6fb" stroke-width="5"><circle cx="51" cy="51" r="36"/><circle cx="51" cy="51" r="25"/></g>
            <circle cx="51" cy="51" r="47" stroke="#fff" stroke-width="8"/>
            <path d="M51 6V40M51 62V97M6 51H40M62 51H97" stroke="#fff" stroke-width="12"/>
            <circle cx="51" cy="51" r="14" stroke="#fff" stroke-width="6" fill="#00ade8"/>
          </svg>
        </label>
      </fieldset>
    `;
  }
}

class LevelSlider extends HTMLElement {
  connectedCallback() {
    this.attachShadow({ mode: "open" });
    this.shadowRoot.innerHTML = `
      <style>
        :host { display: block; flex: 1; margin: 0 27px 0 122px; }

        input {
          appearance: none;
          display: block;
          width: 100%;
          height: 94px;
          margin: 0;
          background: none;
        }

        input::-webkit-slider-runnable-track {
          height: 17px;
          border-radius: 6px;
          background: #00ade8;
        }

        input::-webkit-slider-thumb {
          appearance: none;
          width: 94px;
          height: 94px;
          margin-top: -38px;
          border: 0;
          border-radius: 50%;
          background: #00ade8;
          box-shadow: 0 0 0 14px #fefefe;
        }
      </style>
      <input type="range" min="0" max="100" value="100" aria-label="${this.getAttribute("label")}">
    `;
  }
}

class EffectItem extends HTMLElement {
  connectedCallback() {
    const active = this.hasAttribute("active");
    this.attachShadow({ mode: "open" });
    this.shadowRoot.innerHTML = `
      <style>
        :host {
          display: flex;
          flex-direction: column;
          align-items: center;
          gap: 36px;
          font-size: 53px;
          line-height: 64px;
          color: #808080;
          white-space: nowrap;
        }

        :host([active]) { color: #00ade8; }

        .icon { position: relative; width: 302px; height: 302px; }

        button { padding: 0; border-radius: 50%; }

        .effect {
          display: block;
          width: 100%;
          height: 100%;
          border: 0;
          background: #f8fbff;
          box-shadow: inset 0 0 0 3px #d0d3d4;
        }

        :host([active]) .effect {
          background: #00ade8;
          box-shadow: 0 20px 44px rgba(0, 173, 232, 0.2);
        }

        .edit {
          position: absolute;
          top: -25px;
          right: -31px;
          width: 115px;
          height: 115px;
          border: 5px solid #fee6cd;
          background: #fff;
        }

        .edit svg { display: block; width: 100%; }

        ::slotted(svg) { display: block; width: 100%; }
      </style>
      <div class="icon">
        <button class="effect" aria-labelledby="name"><slot name="icon"></slot></button>
        ${active ? "" : `
        <button class="edit" aria-label="Bearbeiten">
          <svg viewBox="0 0 107 107" stroke="#ff8c0a" stroke-width="9" stroke-linecap="round">
            <path d="M36 63L71 27M34 76H71"/>
          </svg>
        </button>`}
      </div>
      <span id="name"><slot></slot></span>
    `;
  }
}

class HomeBar extends HTMLElement {
  connectedCallback() {
    this.attachShadow({ mode: "open" });
    this.shadowRoot.innerHTML = `
      <style>
        :host { display: flex; justify-content: center; padding: 174px 0 35px; }
        div { width: 676px; height: 21px; border-radius: 11px; background: black; }
      </style>
      <div></div>
    `;
  }
}

customElements.define("app-header", AppHeader);
customElements.define("section-title", SectionTitle);
customElements.define("icon-badge", IconBadge);
customElements.define("mode-card", ModeCard);
customElements.define("music-panel", MusicPanel);
customElements.define("setting-row", SettingRow);
customElements.define("source-toggle", SourceToggle);
customElements.define("level-slider", LevelSlider);
customElements.define("effect-item", EffectItem);
customElements.define("home-bar", HomeBar);
</script>
</body>
</html>
